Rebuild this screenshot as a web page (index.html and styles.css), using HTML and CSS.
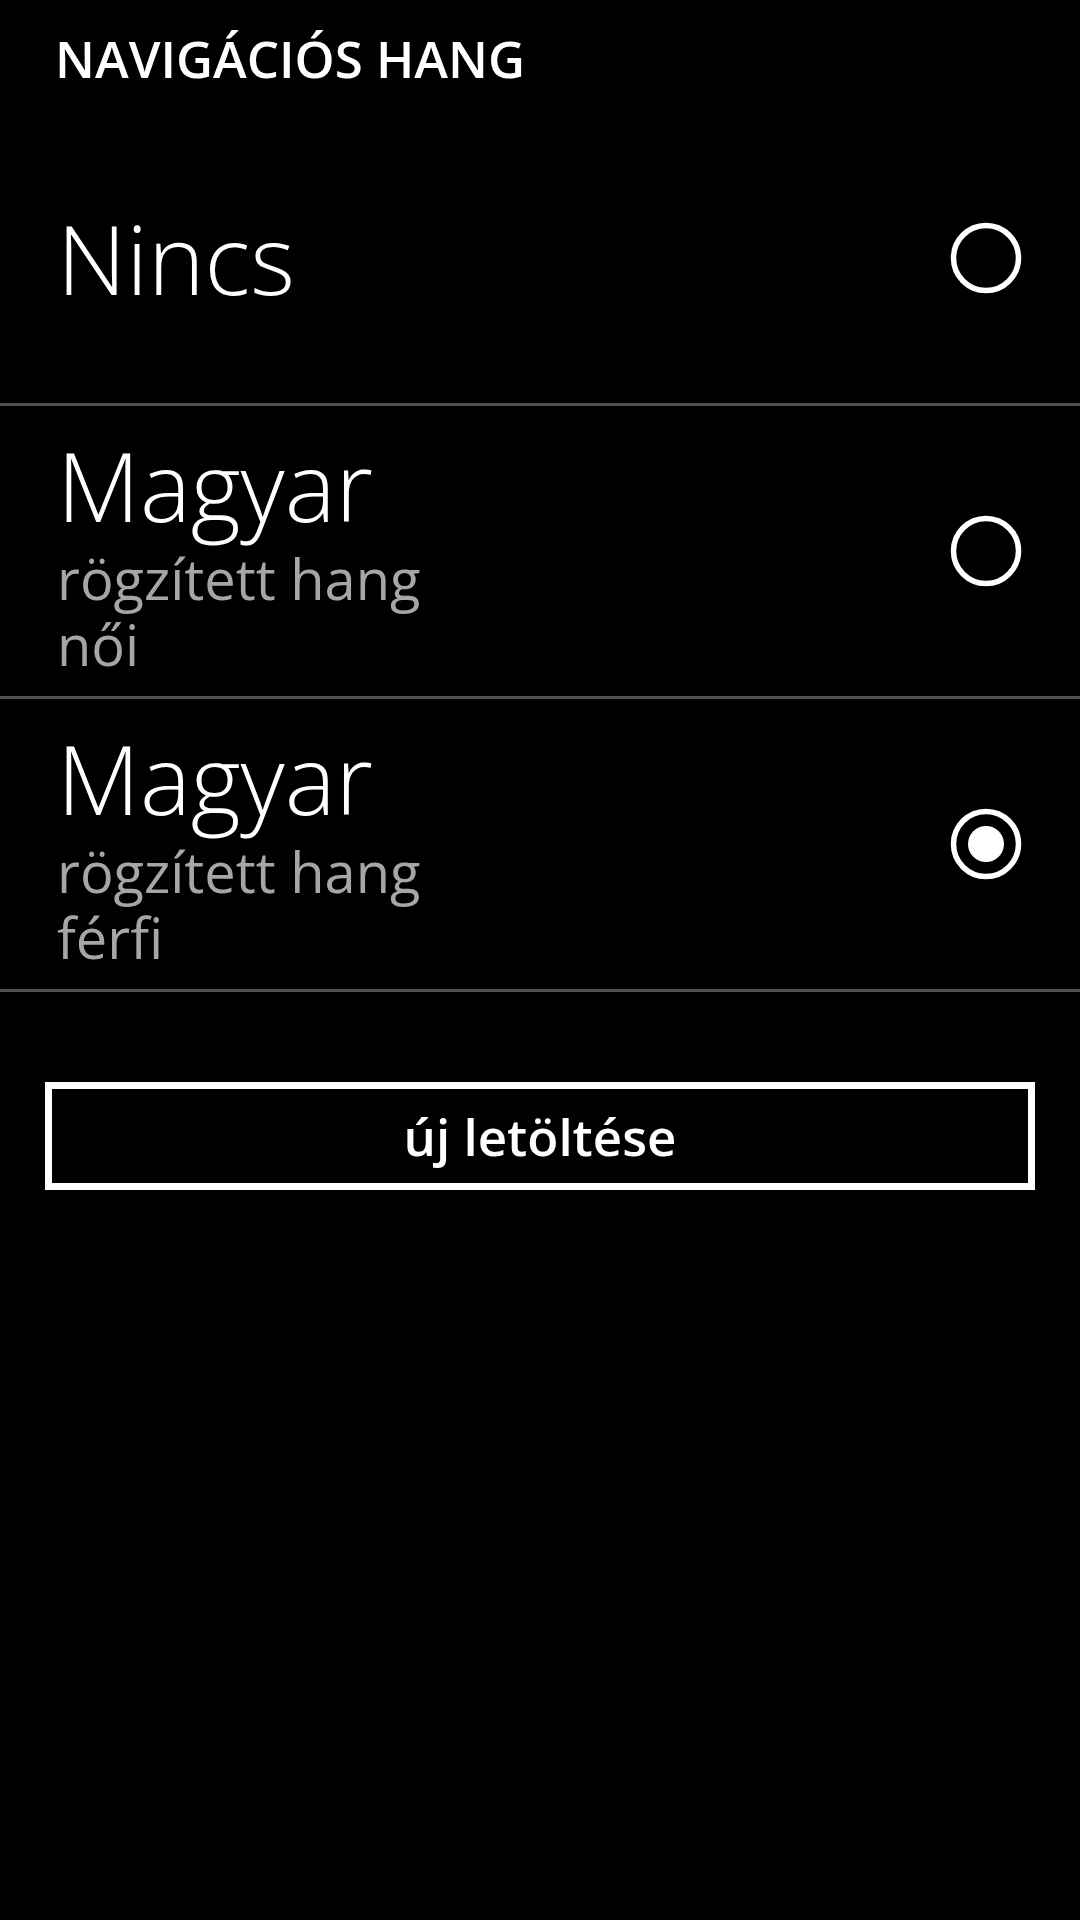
FILE: index.html
```html
<!DOCTYPE html>
<html lang="hu">
<head>
  <meta charset="UTF-8" />
  <meta name="viewport" content="width=device-width, initial-scale=1.0"/>
  <title>Navigációs hang</title>
  <link rel="stylesheet" href="styles.css">
</head>
<body>
  <h1 class="page-title">NAVIGÁCIÓS HANG</h1>

  <ul class="voice-list">
    <li class="voice">
      <div class="voice-text">
        <div class="voice-name">Nincs</div>
      </div>
      <svg class="radio" viewBox="0 0 72 72" width="72" height="72">
        <circle cx="36" cy="36" r="32.5" fill="none" stroke="#fff" stroke-width="5.5"/>
      </svg>
    </li>
    <li class="voice">
      <div class="voice-text">
        <div class="voice-name">Magyar</div>
        <div class="voice-info">rögzített hang</div>
        <div class="voice-info">női</div>
      </div>
      <svg class="radio" viewBox="0 0 72 72" width="72" height="72">
        <circle cx="36" cy="36" r="32.5" fill="none" stroke="#fff" stroke-width="5.5"/>
      </svg>
    </li>
    <li class="voice">
      <div class="voice-text">
        <div class="voice-name">Magyar</div>
        <div class="voice-info">rögzített hang</div>
        <div class="voice-info">férfi</div>
      </div>
      <svg class="radio" viewBox="0 0 72 72" width="72" height="72">
        <circle cx="36" cy="36" r="32.5" fill="none" stroke="#fff" stroke-width="5.5"/>
        <circle cx="36" cy="36" r="18" fill="#fff"/>
      </svg>
    </li>
  </ul>

  <button class="download-btn">új letöltése</button>
</body>
</html>
```

FILE: styles.css
```css
body {
  margin: 0;
  background: #000;
  color: #fff;
  font-family: "Open Sans", "Noto Sans", sans-serif;
}
.page-title {
  margin: 0;
  padding: 24px 0 21px 55px;
  font-size: 51px;
  line-height: 68px;
  font-weight: 600;
}
.voice-list {
  list-style: none;
  margin: 0;
  padding: 0;
}
.voice {
  display: flex;
  align-items: center;
  justify-content: space-between;
  height: 290px;
  padding: 0 58px 0 57px;
  border-bottom: 3px solid #505050;
}
.voice-name {
  font-size: 96px;
  line-height: 120px;
  font-weight: 300;
}
.voice-info {
  font-size: 56px;
  line-height: 66px;
  color: #a6a6a6;
}
.radio {
  display: block;
}
.download-btn {
  display: block;
  width: 990px;
  height: 108px;
  margin: 90px 0 0 45px;
  padding: 0;
  background: #000;
  border: 7px solid #fff;
  color: #fff;
  font-family: inherit;
  font-size: 51px;
  line-height: 68px;
  font-weight: 600;
}
```
